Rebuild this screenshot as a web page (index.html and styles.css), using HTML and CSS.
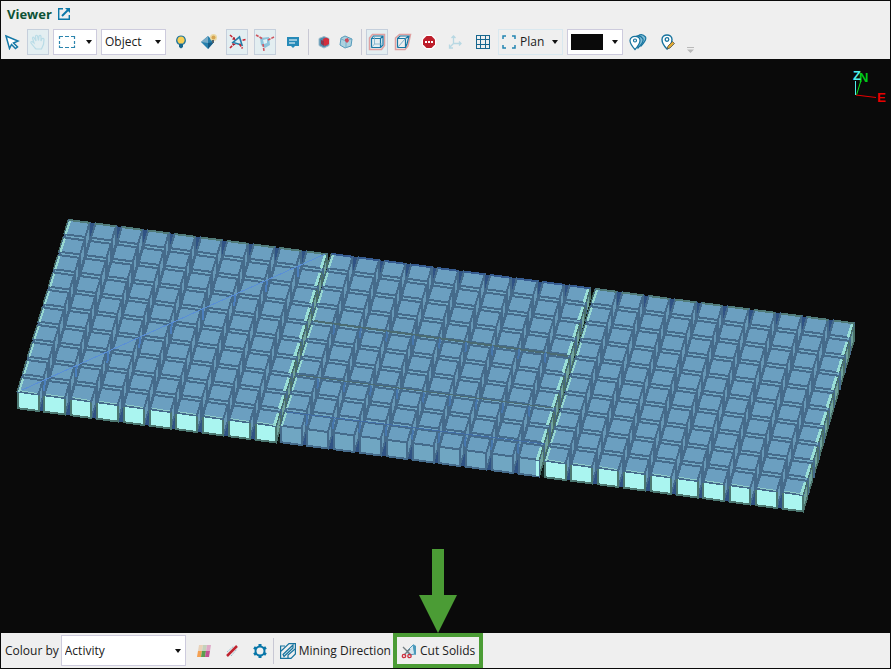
FILE: index.html
```html
<!DOCTYPE html>
<html lang="en">

	<head>
		<meta charset="utf-8">
		<title>Viewer</title>
		<link rel="stylesheet" href="styles.css">
	</head>

	<body>
		<header class="title_bar">
			<h1>Viewer</h1>
			<a href="#" class="popout" aria-label="Open in new window">
				<svg width="14" height="14" viewBox="0 0 14 14" fill="none" stroke="#0b78a8" stroke-width="1.4">
					<path d="M6 1.7H1.7v10.6h10.6V8" />
					<path d="M5 9l6-6" stroke-width="2" />
					<path d="M8 1h5v5z" fill="#0b78a8" stroke="none" />
				</svg>
			</a>
		</header>

		<div class="toolbar" role="toolbar" aria-label="View tools">
			<button class="tool" aria-label="Select">
				<svg width="16" height="16" viewBox="0 0 16 16"><path d="M2 2l12 5-4.500 2 4 4-2 1.500-4-4-2 4z" fill="#fff" stroke="#1478a6" stroke-width="1.500" /></svg>
			</button>
			<button class="tool on" aria-label="Pan">
				<svg width="18" height="18" viewBox="0 0 18 18" fill="none" stroke="#b9dce7" stroke-width="1.200"><path d="M6 15L2 10q-.5-1.500 1-1.500L5 10 3.500 5q.5-1.500 1.500-.5L7 8 6.500 3q1-1.500 2 0L9.500 7.500 10 3q1.200-1.300 2 .3V8l1-2.500q1.500-.7 2 .8l-.5 5L12.500 16H7z" /></svg>
			</button>
			<button class="drop" aria-label="Selection shape" aria-haspopup="menu">
				<svg width="18" height="14" viewBox="0 0 18 14"><path d="M1.500 4V1.500H5M7 1.500h4M13 1.500h3.500V4M16.500 6v3M16.500 10.500v2H13M11 12.500H7M5 12.500H1.500v-2M1.500 9V6" fill="none" stroke="#2c85ae" stroke-width="1.200" /></svg>
			</button>
			<span class="combo object">
				<select aria-label="Selection mode"><option>Object</option></select>
			</span>
			<div class="group">
				<button class="tool" aria-label="Light">
					<svg width="16" height="16" viewBox="0 0 16 16"><path d="M5.500 10C2 7 4 2 8 2s6 5 2.500 8z" fill="#f8cf55" stroke="#20769d" stroke-width="1.200" /><path d="M6 10h4v3L8 14.500 6 13z" fill="#17678f" /></svg>
				</button>
				<button class="tool" aria-label="Shading">
					<svg width="16" height="16" viewBox="0 0 16 16"><path d="M7 2l6 6-6 7-7-7z" fill="#2680ad" /><path d="M7 2v7L0 8z" fill="#77aac6" /><path d="M7 9l6-1-6 7z" fill="#175b84" /><circle cx="12.500" cy="3.500" r="3.500" fill="#ead9a6" /><circle cx="12.500" cy="3.500" r="2" fill="#d6a550" /><path d="M11 6h2v3h-2z" fill="#52636c" /></svg>
				</button>
				<button class="tool on" aria-label="Show normals">
					<svg width="18" height="18" viewBox="0 0 18 18"><path d="M11.500 4l2.500 8-9-2.500z" fill="#dcedf4" stroke="#247fab" stroke-width="1.600" /><path d="M2 2l4.500 4M17.500 6.500l-4 1M2 15l4-4M11.500 11l3 4.500" stroke="#c82432" stroke-width="1.600" stroke-dasharray="3 1" /><path d="M4 6.500l3.500.5L6.500 4zM4 10l4 1.500-3 1z" fill="#a92032" /></svg>
				</button>
				<button class="tool on" aria-label="Show vertex normals">
					<svg width="20" height="20" viewBox="0 0 20 20"><path d="M5 6l9-1 1 8-5 3-4-3z" fill="#8dc4dc" /><path d="M8 8l4-1v4l-3 1z" fill="#e0f0f5" /><path d="M1 3l7 4M19 5l-6 3M8 12l1 7" stroke="#d0555f" stroke-width="1.600" stroke-dasharray="3 1" /></svg>
				</button>
				<button class="tool" aria-label="Labels">
					<svg width="14" height="14" viewBox="0 0 14 14"><path d="M1 2h12v9H9l-2 2-2-2H1z" fill="#268ab8" /><path d="M3 5h8M3 8h6" stroke="#fff" stroke-width="1.200" /></svg>
				</button>
			</div>
			<i class="sep"></i>
			<div class="group tight">
				<button class="tool" aria-label="Solid faces">
					<svg width="14" height="14" viewBox="0 0 14 14"><path d="M7 1.500l5 2v7l-5 2.500-5-2.500v-7z" fill="#4d8dae" stroke="#9cbccc" /><path d="M6 4l3-1.500L12 4v5l-4 2-2-2z" fill="#d32e3d" /><path d="M4 5l3 1v5l-3-2z" fill="#8c3850" /></svg>
				</button>
				<button class="tool" aria-label="Transparent faces">
					<svg width="14" height="14" viewBox="0 0 14 14"><path d="M6 1l7 3-1 7-6 2-5-3 1-7z" fill="#acd1df" stroke="#569bbb" /><path d="M2 4l5 2 5-2M7 6v7" stroke="#77b0ca" fill="none" /><path d="M6 4l3-1 1 3-2 2-2-2z" fill="#cc4b5b" /></svg>
				</button>
			</div>
			<i class="sep"></i>
			<div class="group near">
				<button class="tool on" aria-label="Perspective">
					<svg width="18" height="18" viewBox="0 0 18 18" fill="none"><path d="M1.500 5l3-3.500h12v11l-3 4h-12z" stroke="#dfa0a0" stroke-width="1.500" /><path d="M3.500 5.500h9v9h-9zM3.500 5.500l2-2.500H15v9l-2.500 2.500M12.500 5.500L15 3" stroke="#1878a5" stroke-width="1.200" /><path d="M6.500 3v8H15M3.500 14.500l3-3.500" stroke="#76adca" stroke-width=".8" /></svg>
				</button>
				<button class="tool" aria-label="Orthographic">
					<svg width="18" height="18" viewBox="0 0 18 18" fill="none"><path d="M1.500 5l4-3.500h11L14 13l-3 3.500H1.500z" stroke="#dfa0a0" stroke-width="1.500" /><path d="M3.500 5.500h8v9h-8zM3.500 5.500L6 3h9l-2 8-1.500 3.500M11.500 5.500L15 3" stroke="#1878a5" stroke-width="1.200" /><path d="M3.500 14.500l8-9" stroke="#76adca" /></svg>
				</button>
				<button class="tool" aria-label="Stop">
					<svg width="16" height="16" viewBox="0 0 16 16"><circle cx="8" cy="8" r="7.500" fill="#fff" /><path d="M5.500 2h5L14 5.500v5L10.500 14h-5L2 10.500v-5z" fill="#bd1e2b" /><path d="M4 8h8" stroke="#fff" stroke-width="1.800" stroke-dasharray="2 1" /></svg>
				</button>
			</div>
			<div class="group">
				<button class="tool" aria-label="Axes">
					<svg width="14" height="14" viewBox="0 0 14 14" fill="none" stroke="#b8d8e3" stroke-width="1.300"><path d="M5.500 9V1M3.500 3l2-2 2 2M5.500 8.500H13M11 6.500l2 2-2 2M5.500 8.500L2 12M1.500 9.500V13H5" /></svg>
				</button>
				<button class="tool" aria-label="Grid">
					<svg width="14" height="14" viewBox="0 0 14 14" fill="none" stroke="#17678f" shape-rendering="crispEdges"><path d="M.5.5h13v13H.5zM4.500 0v14M9.500 0v14M0 4.500h14M0 9.500h14" /></svg>
				</button>
			</div>
			<span class="combo plan">
				<svg width="14" height="14" viewBox="0 0 14 14" fill="none" stroke="#2385b2" stroke-width="1.500"><path d="M1 4V1h3M10 1h3v3M13 10v3h-3M4 13H1v-3" /></svg>
				<select aria-label="View direction"><option>Plan</option></select>
			</span>
			<button class="drop colour" aria-label="Background colour" aria-haspopup="listbox"><span class="swatch"></span></button>
			<div class="group pins">
				<button class="tool" aria-label="Pins">
					<svg width="18" height="18" viewBox="0 0 18 18" fill="#82bdd6" stroke="#16739e" stroke-width="1.200"><path d="M12 13q6-6 4.500-9Q13 0 9 3z" /><path d="M9 15q6-6 5-9Q11 1 6 4z" /><path d="M6 16.500Q1 11 1 7.500C1 2 11 2 11 7.500Q11 11 6 16.500z" fill="#fff" /><circle cx="6" cy="7.500" r="1.500" fill="#fff" /></svg>
				</button>
				<button class="tool" aria-label="Edit pin">
					<svg width="18" height="18" viewBox="0 0 18 18"><path d="M8 16Q3 11 3 6.500c0-6 10-6 10 0Q13 11 8 16z" fill="#fff" stroke="#16739e" stroke-width="1.400" /><circle cx="8" cy="6.500" r="1.800" fill="none" stroke="#16739e" stroke-width="1.300" /><path d="M8 16l1-3 4.500-4.500 2 2L11 15z" fill="#e0aa35" stroke="#4e5554" stroke-width=".8" /></svg>
				</button>
			</div>
			<button class="overflow" aria-label="More tools">
				<svg width="7" height="6" viewBox="0 0 7 6"><path d="M0 0h7v1H0zM0 2.500h7L3.500 6z" fill="#b9b9b9" /></svg>
			</button>
		</div>

		<main class="viewport">
			<svg id="scene" viewBox="1 59 889 574" shape-rendering="crispEdges" role="img" aria-label="Block model"></svg>
			<svg class="axes" width="40" height="46" viewBox="850 65 40 46">
				<path d="M856.500 95l4-13" stroke="#00e818" fill="none" />
				<path d="M856 95l20 2.500" stroke="#e80000" fill="none" />
				<path d="M855.500 95V81" stroke="#4eeeee" fill="none" />
				<text x="859" y="82" fill="#00c818">N</text>
				<text x="853" y="80" fill="#4eeeee">Z</text>
				<text x="877" y="102" fill="#e80000">E</text>
			</svg>
		</main>

		<footer class="bottom_bar">
			<label for="colour_by">Colour by</label>
			<span class="combo activity">
				<select id="colour_by"><option>Activity</option></select>
			</span>
			<div class="group bottom_tools">
				<button class="tool" aria-label="Legend">
					<svg width="14" height="14" viewBox="0 0 14 14"><path d="M2 1h4L5 7H1z" fill="#ead2b9" /><path d="M6 1h4L9 7H5z" fill="#c4d2bb" /><path d="M10 1h4l-1 6H9z" fill="#dfa9c7" /><path d="M1 7h4l-1 6H0z" fill="#f4a052" /><path d="M5 7h4l-1 6H4z" fill="#5c9d50" /><path d="M9 7h4l-1 6H8z" fill="#c35092" /></svg>
				</button>
				<button class="tool" aria-label="Line style">
					<svg width="14" height="14" viewBox="0 0 14 14"><path d="M2 8l7-6M6 12l6-7" stroke="#8ebdce" stroke-dasharray="2 1" /><path d="M2 12L12 2" stroke="#bf2430" stroke-width="2.500" /></svg>
				</button>
				<button class="tool" aria-label="Settings">
					<svg width="16" height="16" viewBox="0 0 16 16" fill="none" stroke="#0876a8"><circle cx="8" cy="8" r="4.500" stroke-width="2" /><path d="M8 1v3M8 12v3M2 4.500L4.500 6M11.500 10l2.500 1.500M2 11.500L4.500 10M11.500 6L14 4.500" stroke-width="3" /></svg>
				</button>
			</div>
			<i class="sep"></i>
			<button class="text_tool">
				<svg width="16" height="16" viewBox="0 0 16 16" fill="none" stroke="#16739e" stroke-width="1.200"><path d="M5 3H.6v12.400H11L15.400 11V.6H9L.6 8.500" /><path d="M3 11.500L13 2v3l-9 8.500z" fill="#cfe4ec" /><path d="M8 15v-3l7-6" /></svg>
				Mining Direction
			</button>
			<div class="callout">
				<svg class="arrow" width="38" height="84" viewBox="0 0 38 84"><path d="M13 0h12v46h13L19 84 0 46h13z" fill="#4b9c35" /></svg>
				<button class="text_tool">
					<svg width="16" height="16" viewBox="0 0 16 16"><path d="M6 8l6-6 2 9-6 1z" fill="#d5e7ef" stroke="#4b9abc" /><path d="M12 1l3 2v9l-2-1z" fill="#4b9abc" /><path d="M2 4l8 8M9 6l-6 6" stroke="#737d82" stroke-width="1.300" /><circle cx="3" cy="13" r="1.700" fill="none" stroke="#cf3040" stroke-width="1.300" /><circle cx="8.500" cy="13" r="1.700" fill="none" stroke="#cf3040" stroke-width="1.300" /></svg>
					Cut Solids
				</button>
			</div>
		</footer>
		<script src="viewer.js"></script>
	</body>

</html>
```

FILE: styles.css
```css
* {
	box-sizing: border-box;
	margin: 0;
	padding: 0;
}

body {
	display: flex;
	flex-direction: column;
	height: 100vh;
	border: 1px solid #0a0a0a;
	background: #efefef;
	color: #202020;
	font: 12px/16px "Open Sans", "Noto Sans", sans-serif;
}

button,
select {
	border: 0;
	background: none;
	color: inherit;
	font: inherit;
}

svg {
	display: block;
	flex: none;
}

.title_bar {
	display: flex;
	align-items: center;
	gap: 5px;
	height: 26px;
	padding-left: 6px;
}

.title_bar h1 {
	color: #0d5236;
	font-size: 13px;
	font-weight: 700;
}

.toolbar {
	display: flex;
	align-items: center;
	gap: 4px;
	height: 32px;
	padding-bottom: 2px;
}

.tool {
	display: flex;
	align-items: center;
	justify-content: center;
	width: 22px;
	height: 26px;
}

.tool.on {
	border: 1px solid #c5cfdc;
	background: #e3eef1;
}

.group {
	display: flex;
	gap: 6px;
}

.tight {
	gap: 0;
}

.near {
	gap: 4px;
}

.pins {
	gap: 8px;
}

.sep {
	flex: none;
	width: 1px;
	height: 26px;
	background: #c8c8d4;
}

.drop,
.combo {
	position: relative;
	display: flex;
	align-items: center;
	height: 26px;
	border: 1px solid #cdcbdd;
	background: #fff;
}

.drop {
	width: 44px;
	padding-left: 4px;
}

.drop::after,
.combo::after {
	content: "";
	position: absolute;
	right: 4px;
	border: 3px solid transparent;
	border-top: 4px solid #111;
	border-bottom: 0;
	pointer-events: none;
}

.combo select {
	width: 100%;
	height: 100%;
	padding-left: 3px;
	appearance: none;
}

.object {
	width: 65px;
}

.plan {
	width: 65px;
	padding-left: 3px;
	border-color: #d9e8ef;
	background: none;
}

.plan select {
	padding-left: 4px;
}

.colour {
	width: 56px;
	padding-left: 3px;
}

.swatch {
	width: 32px;
	height: 16px;
	background: #0a0a0a;
}

.overflow {
	align-self: flex-end;
	padding: 4px;
}

.viewport {
	position: relative;
	flex: 1;
	min-height: 0;
	background: #0a0a0a;
}

#scene {
	width: 100%;
	height: 100%;
}

.axes {
	position: absolute;
	top: 6px;
	right: 0;
	font: bold 13px "Liberation Sans", sans-serif;
}

.bottom_bar {
	display: flex;
	align-items: center;
	gap: 2px;
	height: 35px;
	padding-left: 4px;
}

.activity {
	width: 125px;
	height: 31px;
}

.bottom_tools {
	padding-left: 5px;
}

.text_tool {
	display: flex;
	align-items: center;
	gap: 3px;
	padding: 0 4px;
	white-space: nowrap;
}

.bottom_bar > .text_tool {
	padding-right: 0;
}

.callout {
	position: relative;
	align-self: stretch;
	display: flex;
	border: 4px solid #4b9c35;
}

.arrow {
	position: absolute;
	bottom: calc(100% + 4px);
	left: 50%;
	margin-left: -19px;
}
```

FILE: viewer.js
```js
var scene = document.getElementById("scene");
var svg = "";

// pitch of a column and of a row on screen, and the size of a block
var COL = [26.4, 3.5];
var ROW = [-5.2, 17.5];
var W = [20.6, 2.8];
var D = [-4.3, 14.2];
var H = 16.5;

function poly(points, fill, stroke, width) {
	svg += '<polygon points="' + points.join(" ") + '" fill="' + fill + '"' +
		(stroke ? ' stroke="' + stroke + '" stroke-width="' + (width || 1.6) + '"' : "") + '/>';
}

function line(x1, y1, x2, y2, color, width) {
	svg += '<path d="M' + x1 + ' ' + y1 + 'L' + x2 + ' ' + y2 + '" stroke="' + color + '" stroke-width="' + width + '"/>';
}

function add(p, x, y) {
	return [p[0] + x, p[1] + y];
}

function panel(x, y, bright) {
	var a = [x, y];
	var b = add(a, COL[0] * 9 + W[0], COL[1] * 9 + W[1]);
	var dx = ROW[0] * 9 + D[0];
	var dy = ROW[1] * 9 + D[1];
	poly([a, b, add(b, dx, dy + H), add(a, dx, dy + H)], "#305384");

	for(var r = 0; r < 10; r++) {
		for(var c = 0; c < 10; c++) {
			var p = add(a, COL[0] * c + ROW[0] * r, COL[1] * c + ROW[1] * r);
			var q = add(p, W[0], W[1]);
			var s = add(q, D[0], D[1]);
			var t = add(p, D[0], D[1]);
			var last = c == 9;
			var front = r == 9;
			var lit = front && bright;

			poly([q, s, add(s, 0, H), add(q, 0, H)], last ? "#6fa39c" : "#6798b6", last ? "#4a7069" : "#456b8b");
			poly([t, s, add(s, 0, H), add(t, 0, H)], lit ? "#aaf5f0" : "#70a6c2", lit ? "#4c7771" : "#456b8b", 2);
			poly([p, q, s, t], "#6b9fc0", "#456b8b", 2);
			if(c == 0) {
				line(p[0] + 1, p[1] + 1, t[0] + 1, t[1], "#96d7d1", 2);
				line(p[0] - 1, p[1], t[0] - 1, t[1], "#466c64", 1);
			}
			if(last) {
				line(q[0] - 2, q[1] + 1, s[0] - 2, s[1], "#9adfd8", 3);
				line(q[0], q[1], s[0], s[1], "#466c64", 1);
			}
			if(lit) {
				line(t[0] + 2, t[1] - 1, s[0] - 1, s[1] - 1, "#8ecbc9", 1);
			}
			if(front && last && !bright) {
				line(s[0] - 2, s[1] + 1, s[0] - 2, s[1] + H - 1, "#aaf5f0", 3);
			}
			if(r == 0) {
				line(p[0], p[1], q[0], q[1], bright ? "#507b79" : "#355b90", 2);
			}
		}
	}
	// dark slot along the right side of the panel
	if(x < 500) {
		line(b[0] + 4, b[1] + 4, b[0] + dx + 3, b[1] + dy + H, "#10201c", 3);
	}
}

panel(69, 220, true);
panel(332, 254, false);
panel(596, 289, true);

// fault lines
line(22, 390, 325, 254, "#5a8fd6", 1);
for(var i = 0; i < 9; i++) {
	line(45 + i * 31.7, 380 - i * 14.2, 44 + i * 31.7, 391 - i * 14.2, "#4a7fbd", 2);
}
var cuts = [[314, 321, 568, 356], [298, 375, 553, 408], [287, 412, 545, 444]];
for(var k = 0; k < 3; k++) {
	var f = cuts[k];
	line(f[0], f[1], f[2], f[3], k < 2 ? "#4b6b72" : "#416da6", k < 1 ? 2 : 1);
	for(var n = 1; n < 10; n++) {
		var fx = f[0] - 6 + n * 26.4;
		var fy = f[1] + n * 3.5;
		line(fx, fy, fx - 1, fy + 10, "#4677ad", 2);
	}
}

scene.innerHTML = svg;
```
